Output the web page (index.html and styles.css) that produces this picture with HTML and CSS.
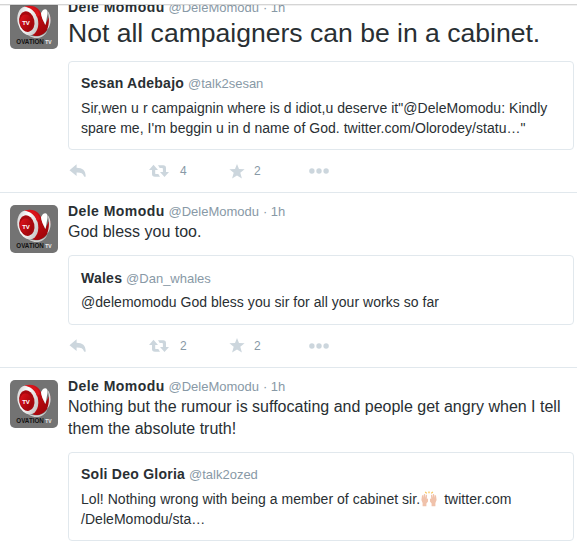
FILE: index.html
```html
<!DOCTYPE html>
<html lang="en">
<head>
  <meta charset="UTF-8" />
  <meta name="viewport" content="width=device-width, initial-scale=1.0"/>
  <title>Dele Momodu</title>
  <link rel="stylesheet" href="styles.css">
</head>
<body>
  <!-- Shared shapes -->
  <svg class="defs" width="0" height="0">
    <defs>
      <linearGradient id="steel" x1="0" y1="0" x2="1" y2="1">
        <stop offset="0" stop-color="#c4c4c4"/>
        <stop offset="0.4" stop-color="#ffffff"/>
        <stop offset="1" stop-color="#b5b5b5"/>
      </linearGradient>
      <linearGradient id="red" x1="0" y1="0" x2="1" y2="1">
        <stop offset="0" stop-color="#e3141c"/>
        <stop offset="1" stop-color="#930207"/>
      </linearGradient>
    </defs>
    <symbol id="logo" viewBox="0 0 48 48">
      <rect width="48" height="48" fill="#737373"/>
      <path d="M15 5.5C24 3 31 8 31.5 15L35 24L40 14C41.5 25 36 34 28 35C23 35.5 21 33 20 31Z" fill="url(#red)"/>
      <path d="M33 9C36 7 38 9 37.5 13L35.5 24C33 20 31 15 31 12Z" fill="#fff"/>
      <path d="M37.5 10C41.5 14 42 24 37 29C39.5 23 39.5 16 37.5 10Z" fill="#ddd"/>
      <path d="M18 34C27 37 35 35 38 28C35 37 26 40 18 34Z" fill="#cfcfcf"/>
      <ellipse cx="17.8" cy="20" rx="10.2" ry="14.6" transform="rotate(-14 17.8 20)" fill="url(#steel)"/>
      <path d="M14 5.6C21 3.5 28 7 30 14L27 16C25 10 20 6.5 14 5.6Z" fill="#d8141b"/>
      <ellipse cx="16.8" cy="20.6" rx="7.6" ry="10.4" transform="rotate(-12 16.8 20.6)" fill="#a6090f"/>
      <ellipse cx="16.2" cy="21.2" rx="6.2" ry="7.8" transform="rotate(-12 16.2 21.2)" fill="url(#red)"/>
      <text x="12.2" y="23.6" class="logo-tv">TV</text>
      <text x="6.3" y="43" textLength="27.5" lengthAdjust="spacingAndGlyphs" class="logo-name">OVATION</text>
      <text x="35.2" y="43" class="logo-sub">TV</text>
    </symbol>
    <symbol id="reply" viewBox="0 0 18 14">
      <path d="M0.5 6.2L7.6 0.3V3.7C13.5 3.8 16.7 6.4 16.7 12.3C16.7 13 15.3 13 15 12.3C14 9.4 11.9 8.5 7.6 8.6V12Z"/>
    </symbol>
    <symbol id="retweet" viewBox="0 0 20 14">
      <path d="M4.5 0.7L9 6H6.2V9.2C6.2 9.8 6.5 10.1 7.1 10.1H9.3L11 12.8H5.9C4 12.8 3 11.7 3 10V6H0Z"/>
      <path d="M9 1.3H14.2C16 1.3 17 2.3 17 4.1V7.9H20L15.5 13.1L11 7.9H13.9V4.8C13.9 4.2 13.6 4 13 4H10.7Z"/>
    </symbol>
    <symbol id="star" viewBox="0 0 16 15">
      <path d="M8 0L10 4.9L15.6 5.2L11.3 8.8L12.9 14.4L8 11.4L3.1 14.4L4.7 8.8L0.4 5.2L6 4.9Z"/>
    </symbol>
    <symbol id="more" viewBox="0 0 20 6">
      <circle cx="2.9" cy="3" r="2.7"/>
      <circle cx="10" cy="3" r="2.7"/>
      <circle cx="17.1" cy="3" r="2.7"/>
    </symbol>
  </svg>

  <div class="topbar"></div>

  <div class="stream">
    <div class="tweet">
      <svg class="avatar"><use href="#logo"/></svg>
      <div class="content">
        <div class="header"><b class="name">Dele Momodu</b> <span class="handle">@DeleMomodu</span> <span class="time">· 1h</span></div>
        <p class="text text-large">Not all campaigners can be in a cabinet.</p>
        <div class="quote">
          <div class="quote-header"><b class="name">Sesan Adebajo</b> <span class="handle">@talk2sesan</span></div>
          <p class="quote-text">Sir,wen u r campaignin where is d idiot,u deserve it"@DeleMomodu: Kindly<br>spare me, I'm beggin u in d name of God. twitter.com/Olorodey/statu…"</p>
        </div>
        <div class="actions">
          <div class="action"><svg width="18" height="14"><use href="#reply"/></svg></div>
          <div class="action"><svg width="20" height="14"><use href="#retweet"/></svg><span>4</span></div>
          <div class="action action-star"><svg width="16" height="15"><use href="#star"/></svg><span>2</span></div>
          <div class="action"><svg width="20" height="6"><use href="#more"/></svg></div>
        </div>
      </div>
    </div>

    <div class="tweet">
      <svg class="avatar"><use href="#logo"/></svg>
      <div class="content">
        <div class="header"><b class="name">Dele Momodu</b> <span class="handle">@DeleMomodu</span> <span class="time">· 1h</span></div>
        <p class="text">God bless you too.</p>
        <div class="quote">
          <div class="quote-header"><b class="name">Wales</b> <span class="handle">@Dan_whales</span></div>
          <p class="quote-text">@delemomodu God bless you sir for all your works so far</p>
        </div>
        <div class="actions">
          <div class="action"><svg width="18" height="14"><use href="#reply"/></svg></div>
          <div class="action"><svg width="20" height="14"><use href="#retweet"/></svg><span>2</span></div>
          <div class="action action-star"><svg width="16" height="15"><use href="#star"/></svg><span>2</span></div>
          <div class="action"><svg width="20" height="6"><use href="#more"/></svg></div>
        </div>
      </div>
    </div>

    <div class="tweet">
      <svg class="avatar"><use href="#logo"/></svg>
      <div class="content">
        <div class="header"><b class="name">Dele Momodu</b> <span class="handle">@DeleMomodu</span> <span class="time">· 1h</span></div>
        <p class="text">Nothing but the rumour is suffocating and people get angry when I tell<br>them the absolute truth!</p>
        <div class="quote">
          <div class="quote-header"><b class="name">Soli Deo Gloria</b> <span class="handle">@talk2ozed</span></div>
          <p class="quote-text">Lol! Nothing wrong with being a member of cabinet sir.<svg class="emoji" viewBox="0 0 16 16">
            <path d="M1 4.5L2.2 4V7L3 3L4.2 3.2V7L5 3.6L6 4.2L5.8 8L7 7.5L7 10.5L5.4 12.5V15.3H1.6V12L0.4 9Z" fill="#f0c2ab"/>
            <path d="M15 4.5L13.8 4V7L13 3L11.8 3.2V7L11 3.6L10 4.2L10.2 8L9 7.5L9 10.5L10.6 12.5V15.3H14.4V12L15.6 9Z" fill="#f0c2ab"/>
            <path d="M4.2 0.8L5.7 2.4M8 0.4V2.2M11.8 0.8L10.3 2.4" stroke="#f8c34e" stroke-width="1.2"/>
          </svg><span class="link">twitter.com<br>/DeleMomodu/sta…</span></p>
        </div>
      </div>
    </div>
  </div>
</body>
</html>
```

FILE: styles.css
```css
body {
  margin: 0;
  height: 549px;
  overflow: hidden;
  background-color: #fff;
  color: #292f33;
  font-family: "Liberation Sans", Arial, sans-serif;
  font-size: 14px;
}

.defs {
  position: absolute;
}

/* Sticky bar over the scrolled stream */
.topbar {
  position: fixed;
  top: 0;
  left: 0;
  right: 0;
  height: 4px;
  background-color: #fff;
  border-bottom: 1px solid #d5d5d5;
  box-shadow: 0 1px 0 rgba(0, 0, 0, 0.06);
  z-index: 10;
}

.tweet {
  display: flex;
  gap: 10px;
  padding: 12px 3px 0 10px;
  border-top: 1px solid #e1e8ed;
}

.tweet:first-child {
  padding-top: 1px;
  border-top: none;
}

.avatar {
  width: 48px;
  height: 48px;
  border-radius: 5px;
  flex-shrink: 0;
}

.logo-tv {
  font-size: 6px;
  font-weight: bold;
  fill: #fff;
}

.logo-name {
  font-size: 6.6px;
  font-weight: bold;
  fill: #111;
}

.logo-sub {
  font-size: 5px;
  font-weight: bold;
  fill: #eee;
}

.content {
  flex: 1;
  min-width: 0;
}

.header {
  height: 16px;
  line-height: 12px;
  white-space: nowrap;
}

.name {
  letter-spacing: 0.44px;
}

.handle,
.time {
  font-size: 13px;
  color: #8899a6;
}

.text {
  margin: 0;
  font-size: 16px;
  line-height: 22px;
  white-space: nowrap;
}

.text-large {
  font-size: 26.55px;
  line-height: 32px;
}

.quote {
  margin-top: 12px;
  padding: 12.3px 12px 11px;
  border: 1px solid #e1e8ed;
  border-radius: 4px;
}

.quote-header {
  height: 24.8px;
  line-height: 19px;
}

.quote-header .name {
  letter-spacing: 0.25px;
}

.quote-text {
  margin: 0;
  line-height: 19.6px;
  letter-spacing: 0.04px;
  white-space: nowrap;
}

.emoji {
  width: 16px;
  height: 16px;
  margin-left: 1px;
  margin-right: 7px;
  margin-top: -4px;
  vertical-align: -3px;
  fill: none;
}

.actions {
  display: flex;
  align-items: center;
  height: 42px;
  padding-left: 1px;
  color: #8899a6;
  font-size: 12px;
}

.action {
  display: flex;
  align-items: center;
  gap: 11px;
  width: 80px;
}

.action svg {
  fill: #ccd6dd;
}

.action-star {
  gap: 9px;
}
```
